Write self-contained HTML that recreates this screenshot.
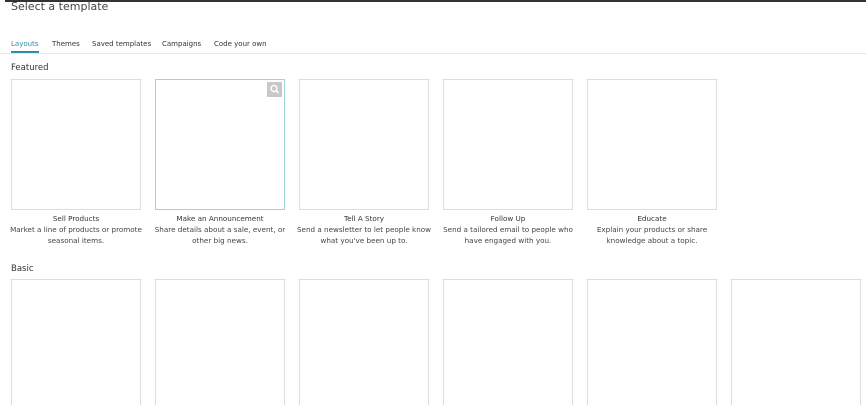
<html style="overflow:hidden;height:405px"><head><style>
body{margin:0;width:866px;height:405px;background:#fff;overflow:hidden;position:relative;font-family:"DejaVu Sans","Liberation Sans",sans-serif;color:#333}
.a{position:absolute}
.card{position:absolute;width:128px;height:129px;border:1px solid #ddd;background:#fff}
.t{position:absolute;width:150px;text-align:center;font-size:7.2px;line-height:11px;color:#444}
.t b{font-weight:normal;color:#333;display:block}
</style></head><body>
<div class="a" style="left:5px;top:0;width:861px;height:2px;background:#333"></div>
<div class="a" style="left:11px;top:0px;font-size:11px;color:#444">Select a template</div>
<div class="a" style="left:11px;top:40px;font-size:7px;color:#2a8fa8">Layouts</div>
<div class="a" style="left:11px;top:51px;width:28px;height:2px;background:#2a8fa8"></div>
<div class="a" style="left:52px;top:40px;font-size:7px">Themes</div>
<div class="a" style="left:92px;top:40px;font-size:7px">Saved templates</div>
<div class="a" style="left:162px;top:40px;font-size:7px">Campaigns</div>
<div class="a" style="left:214px;top:40px;font-size:7px">Code your own</div>
<div class="a" style="left:0;top:53px;width:866px;height:1px;background:#e6e6e6"></div>
<div class="a" style="left:11px;top:63px;font-size:8.5px">Featured</div>
<div class="card" style="left:11px;top:79px"></div>
<div class="card" style="left:155px;top:79px;border-color:#9fd3de"></div>
<div class="a" style="left:267px;top:82px;width:15px;height:15px;background:#c8c8c8;border-radius:1px"><svg width="15" height="15"><circle cx="7" cy="6.5" r="3" fill="none" stroke="#fff" stroke-width="1.4"/><line x1="9" y1="8.5" x2="11.5" y2="11" stroke="#fff" stroke-width="1.6"/></svg></div>
<div class="card" style="left:299px;top:79px"></div>
<div class="card" style="left:443px;top:79px"></div>
<div class="card" style="left:587px;top:79px"></div>
<div class="t" style="left:1px;top:213px"><b>Sell Products</b>Market a line of products or promote<br>seasonal items.</div>
<div class="t" style="left:145px;top:213px"><b>Make an Announcement</b>Share details about a sale, event, or<br>other big news.</div>
<div class="t" style="left:289px;top:213px"><b>Tell A Story</b>Send a newsletter to let people know<br>what you've been up to.</div>
<div class="t" style="left:433px;top:213px"><b>Follow Up</b>Send a tailored email to people who<br>have engaged with you.</div>
<div class="t" style="left:577px;top:213px"><b>Educate</b>Explain your products or share<br>knowledge about a topic.</div>
<div class="a" style="left:11px;top:264px;font-size:8.5px">Basic</div>
<div class="card" style="left:11px;top:279px;height:140px"></div>
<div class="card" style="left:155px;top:279px;height:140px"></div>
<div class="card" style="left:299px;top:279px;height:140px"></div>
<div class="card" style="left:443px;top:279px;height:140px"></div>
<div class="card" style="left:587px;top:279px;height:140px"></div>
<div class="card" style="left:731px;top:279px;height:140px"></div>
</body></html>
